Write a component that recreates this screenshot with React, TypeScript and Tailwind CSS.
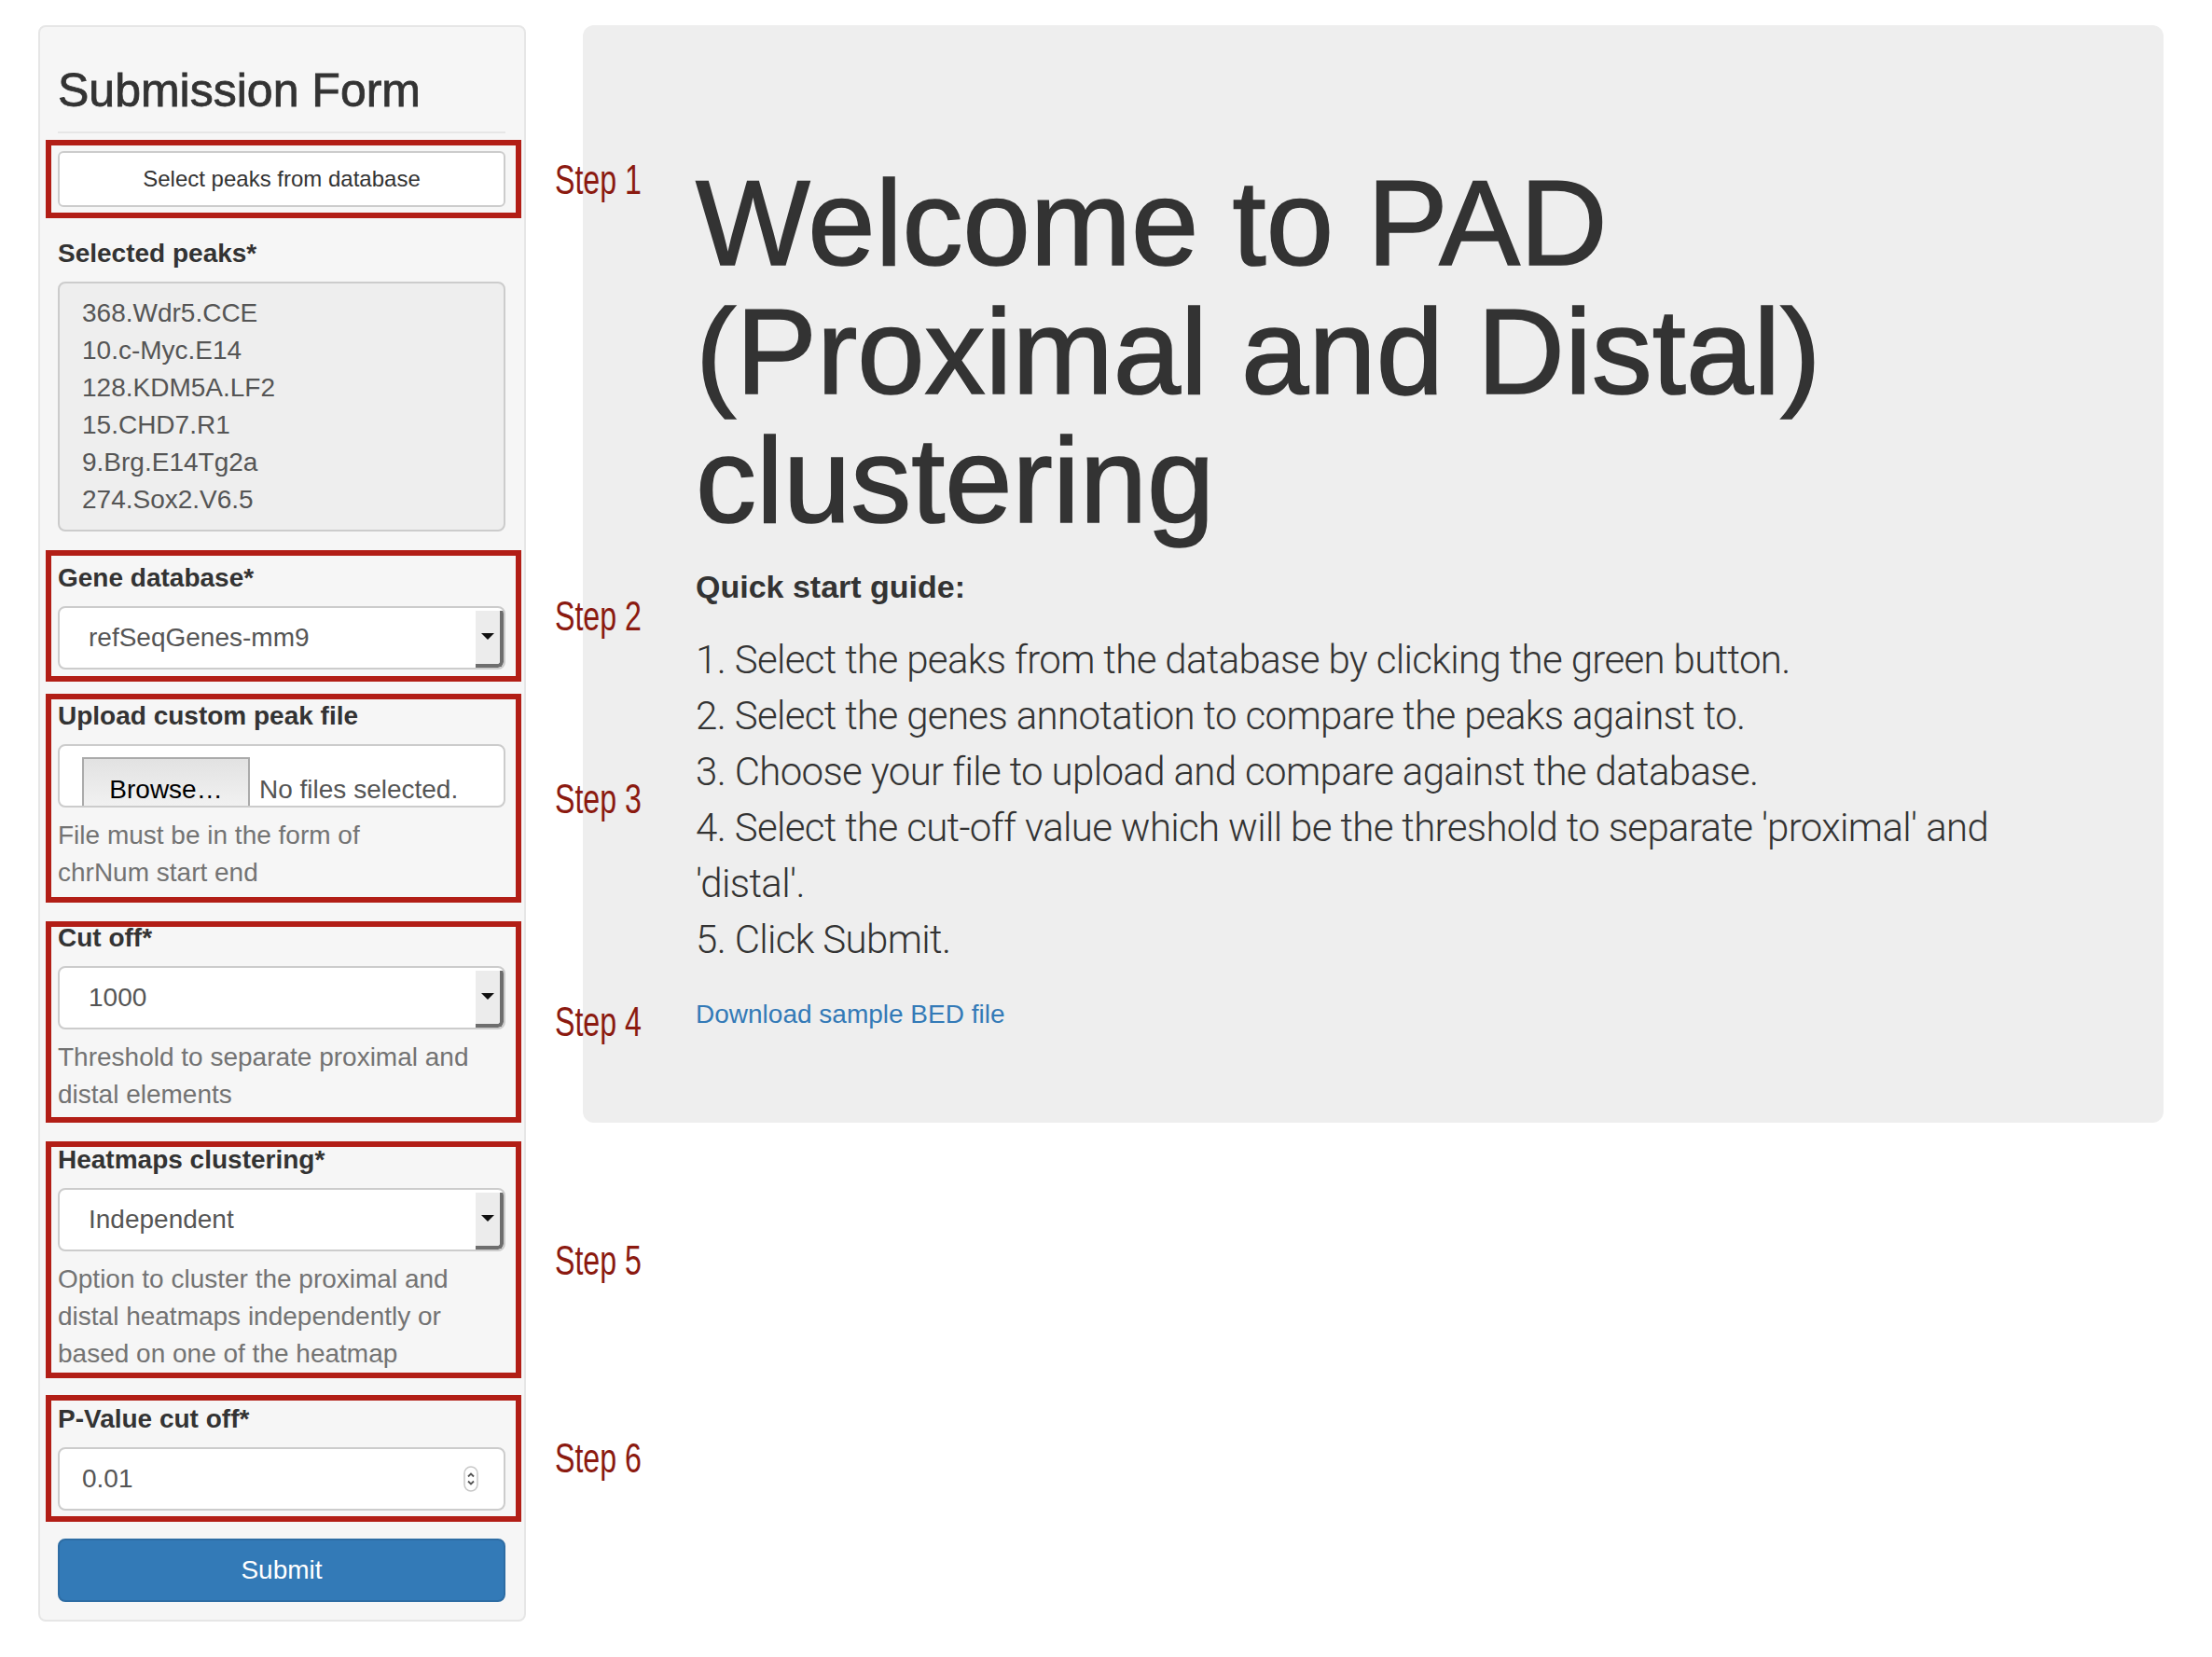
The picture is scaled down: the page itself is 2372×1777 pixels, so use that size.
import React from "react";

function RedBox({ pos }: { pos: string }) {
  return (
    <div
      className={
        "pointer-events-none absolute -left-[13px] -right-[17px] border-[6px] border-[#b21e16] " +
        pos
      }
    />
  );
}

function Arrow() {
  return (
    <svg width="14" height="8" viewBox="0 0 14 8">
      <path d="M0 0 L14 0 L7 7 Z" fill="#111" />
    </svg>
  );
}

function SelectBox({ value }: { value: string }) {
  return (
    <div className="flex h-[68px] w-full overflow-hidden rounded-[8px] border-2 border-[#cccccc] bg-white">
      <div className="flex flex-1 items-center pl-[31px] text-[28px] text-[#555]">{value}</div>
      <div className="mt-[3px] flex w-[30px] items-center justify-center rounded-br-[6px] border-b-4 border-r-4 border-[#6e6e6e] bg-[#ececec] pb-[2px]">
        <Arrow />
      </div>
    </div>
  );
}

function Label({ children }: { children: React.ReactNode }) {
  return <div className="mb-[10px] text-[28px] font-bold leading-[40px] text-[#333]">{children}</div>;
}

function Help({ children }: { children: React.ReactNode }) {
  return <div className="mt-[10px] text-[28px] leading-[40px] text-[#737373]">{children}</div>;
}

const peaks = [
  "368.Wdr5.CCE",
  "10.c-Myc.E14",
  "128.KDM5A.LF2",
  "15.CHD7.R1",
  "9.Brg.E14Tg2a",
  "274.Sox2.V6.5",
];

export default function App() {
  return (
    <div className="relative h-[1777px] w-[2372px] bg-white font-['Liberation_Sans',Arial,sans-serif] text-[#333]">
      <div className="flex items-start gap-[61px] pl-[41px] pt-[27px]">
        {/* Sidebar */}
        <div className="w-[523px] rounded-[8px] border-2 border-[#e6e6e6] bg-[#f6f6f6] pb-[19px] pl-[19px] pr-[20px] pt-[19px]">
          <h3 className="mt-[22px] text-[50px] font-normal leading-[55px] text-[#333] [-webkit-text-stroke:0.8px_#333]">
            Submission Form
          </h3>
          <div className="mt-[16px] h-[2px] bg-[#e6e6e6]" />

          <div className="relative mt-[19px]">
            <button className="h-[60px] w-full rounded-[6px] border-2 border-[#cccccc] bg-white text-[24px] text-[#333]">
              Select peaks from database
            </button>
            <RedBox pos="-top-[12px] -bottom-[12px]" />
          </div>

          <div className="mt-[30px]">
            <Label>Selected peaks*</Label>
            <div className="rounded-[8px] border-2 border-[#cccccc] bg-[#eeeeee] pb-[12px] pl-[24px] pt-[12px] text-[28px] leading-[40px] text-[#555]">
              {peaks.map((p) => (
                <div key={p}>{p}</div>
              ))}
            </div>
          </div>

          <div className="relative mt-[30px]">
            <Label>Gene database*</Label>
            <SelectBox value="refSeqGenes-mm9" />
            <RedBox pos="-top-[10px] -bottom-[13px]" />
          </div>

          <div className="relative mt-[30px]">
            <Label>Upload custom peak file</Label>
            <div className="flex h-[68px] items-start overflow-hidden rounded-[8px] border-2 border-[#cccccc] bg-white pl-[24px] pt-[12px]">
              <div className="h-[60px] w-[180px] border-2 border-[#aaaaaa] bg-gradient-to-b from-[#e2e2e2] to-[#f3f3f3] pt-[13px] text-center text-[28px] leading-[40px] text-black">
                Browse…
              </div>
              <span className="ml-[10px] pt-[15px] text-[28px] leading-[40px] text-[#555]">No files selected.</span>
            </div>
            <Help>
              File must be in the form of
              <br />
              chrNum start end
            </Help>
            <RedBox pos="-top-[4px] -bottom-[12px]" />
          </div>

          <div className="relative mt-[30px]">
            <Label>Cut off*</Label>
            <SelectBox value="1000" />
            <Help>
              Threshold to separate proximal and
              <br />
              distal elements
            </Help>
            <RedBox pos="top-[2px] -bottom-[10px]" />
          </div>

          <div className="relative mt-[30px]">
            <Label>Heatmaps clustering*</Label>
            <SelectBox value="Independent" />
            <Help>
              Option to cluster the proximal and
              <br />
              distal heatmaps independently or
              <br />
              based on one of the heatmap
            </Help>
            <RedBox pos="top-[0px] -bottom-[6px]" />
          </div>

          <div className="relative mt-[30px]">
            <Label>P-Value cut off*</Label>
            <div className="flex h-[68px] items-center rounded-[8px] border-2 border-[#cccccc] bg-white pl-[24px] pr-[27px]">
              <span className="flex-1 text-[28px] text-[#555]">0.01</span>
              <svg width="16" height="28" viewBox="0 0 16 28">
                <rect x="1" y="1" width="14" height="26" rx="7" fill="#fff" stroke="#c8c8c8" strokeWidth="1.5" />
                <path d="M5 11.5 L8 8.5 L11 11.5" fill="none" stroke="#555" strokeWidth="1.8" />
                <path d="M5 16.5 L8 19.5 L11 16.5" fill="none" stroke="#555" strokeWidth="1.8" />
              </svg>
            </div>
            <RedBox pos="-top-[6px] -bottom-[12px]" />
          </div>

          <button className="mt-[30px] h-[68px] w-full rounded-[8px] border-2 border-[#2e6da4] bg-[#337ab7] text-[28px] text-white">
            Submit
          </button>
        </div>

        {/* Jumbotron */}
        <div className="w-[1695px] rounded-[12px] bg-[#eeeeee] pb-[96px] pl-[121px] pr-[120px] pt-[143px]">
          <h1 className="text-[130px] font-normal leading-[138px] text-[#333] [-webkit-text-stroke:1.6px_#333]">
            Welcome to PAD (Proximal and Distal) clustering
          </h1>
          <h4 className="mt-[26px] text-[34px] font-bold leading-[38px] text-[#333]">Quick start guide:</h4>
          <p className="mt-[30px] font-['Roboto',sans-serif] text-[42px] font-light leading-[60px] tracking-[-0.65px] text-[#333]">
            1. Select the peaks from the database by clicking the green button.
            <br />
            2. Select the genes annotation to compare the peaks against to.
            <br />
            3. Choose your file to upload and compare against the database.
            <br />
            4. Select the cut-off value which will be the threshold to separate 'proximal' and 'distal'.
            <br />
            5. Click Submit.
          </p>
          <div className="mt-[30px] text-[28px] leading-[40px] text-[#337ab7]">Download sample BED file</div>
        </div>
      </div>

      {/* Step annotations */}
      <div className="absolute left-[595px] top-[171px] origin-left scale-x-[0.73] text-[44px] leading-[44px] text-[#8b1a10]">Step 1</div>
      <div className="absolute left-[595px] top-[639px] origin-left scale-x-[0.73] text-[44px] leading-[44px] text-[#8b1a10]">Step 2</div>
      <div className="absolute left-[595px] top-[835px] origin-left scale-x-[0.73] text-[44px] leading-[44px] text-[#8b1a10]">Step 3</div>
      <div className="absolute left-[595px] top-[1074px] origin-left scale-x-[0.73] text-[44px] leading-[44px] text-[#8b1a10]">Step 4</div>
      <div className="absolute left-[595px] top-[1330px] origin-left scale-x-[0.73] text-[44px] leading-[44px] text-[#8b1a10]">Step 5</div>
      <div className="absolute left-[595px] top-[1542px] origin-left scale-x-[0.73] text-[44px] leading-[44px] text-[#8b1a10]">Step 6</div>
    </div>
  );
}
